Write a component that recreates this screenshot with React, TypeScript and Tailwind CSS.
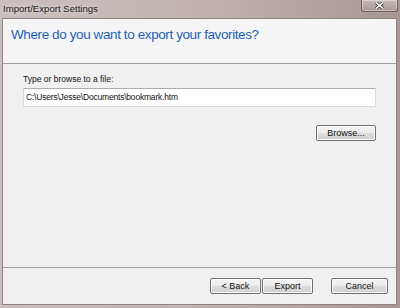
const font = { fontFamily: '"Liberation Sans", Arial, sans-serif' };

function WinButton({ label, className = "" }: { label: string; className?: string }) {
  return (
    <button
      className={
        "h-[16px] rounded-[2px] border border-[#707070] bg-[linear-gradient(#f4f4f4_0%,#ebebeb_48%,#dddddd_52%,#cfcfcf_100%)] text-[9px] leading-none text-[#111] shadow-[inset_0_0_0_1px_#fcfcfc] flex items-center justify-center " +
        className
      }
    >
      {label}
    </button>
  );
}

export default function App() {
  return (
    <div
      className="w-[400px] h-[308px] flex flex-col overflow-hidden bg-[linear-gradient(90deg,#cbc0bf_0%,#c2b5b3_45%,#b2a3a0_80%,#a69794_100%)]"
      style={font}
    >
      {/* title bar */}
      <div className="h-[18px] flex items-start justify-between pl-[3px] pr-[2px]">
        <span className="mt-[3px] text-[9.6px] leading-[11px] text-[#1a1a1a] [text-shadow:0_0_4px_#f4eeee]">
          Import/Export Settings
        </span>
        <div className="w-[37px] h-[12px] rounded-b-[3px] border border-t-0 border-[#6e6260] bg-[linear-gradient(#c5b9b6,#a79995)] shadow-[inset_0_0_0_1px_rgba(255,255,255,0.35)] flex items-center justify-center">
          <svg width="9" height="7" viewBox="0 0 9 7">
            <path d="M1 0.5 L8 6.5 M8 0.5 L1 6.5" stroke="#3a3332" strokeWidth="3" />
            <path d="M1 0.5 L8 6.5 M8 0.5 L1 6.5" stroke="#ffffff" strokeWidth="1.6" />
          </svg>
        </div>
      </div>

      {/* client area */}
      <div className="flex-1 ml-[2px] mr-[3px] mb-[3px] border border-[#8d8382] bg-[#f0f0f0] flex flex-col">
        <div className="h-[44px] bg-[#f5f5f5] pl-[8px] pt-[7px]">
          <h1 className="text-[13.5px] leading-[17px] tracking-[-0.4px] text-[#1f5fb4]">
            Where do you want to export your favorites?
          </h1>
        </div>
        <div className="h-px bg-[#a0a0a0]" />

        <div className="flex-1 pl-[20px] pr-[20px] pt-[10px] flex flex-col">
          <label className="text-[8.5px] leading-[11px] text-[#111]">Type or browse to a file:</label>
          <div className="mt-[3px] h-[19px] w-[353px] border border-[#d5dbe2] border-t-[#abadb3] bg-white flex items-center pl-[2px]">
            <span className="text-[8.5px] leading-none tracking-[-0.2px] text-[#111]">
              C:\Users\Jesse\Documents\bookmark.htm
            </span>
          </div>
          <div className="mt-[18px] w-[353px] flex justify-end">
            <WinButton label="Browse..." className="w-[60px]" />
          </div>
        </div>

        <div className="h-px bg-[#a0a0a0]" />
        <div className="h-[36px] flex items-start justify-end pt-[10px] pr-[8px]">
          <WinButton label="< Back" className="w-[51px]" />
          <WinButton label="Export" className="w-[51px] ml-px" />
          <WinButton label="Cancel" className="w-[57px] ml-[18px]" />
        </div>
      </div>
    </div>
  );
}
